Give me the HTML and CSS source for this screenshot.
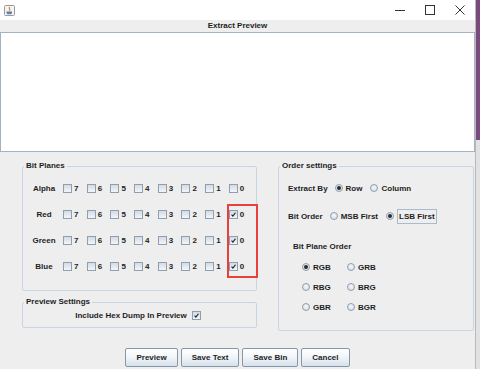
FILE: index.html
```html
<!DOCTYPE html>
<html lang="en">
<head>
  <meta charset="UTF-8" />
  <meta name="viewport" content="width=device-width, initial-scale=1.0" />
  <link rel="stylesheet" href="styles.css">
</head>
<body>
  <div class="screen">
    <div class="window">
      <div class="titlebar">
        <svg class="app-icon" width="11" height="11" viewBox="0 0 11 11">
          <rect x="0.5" y="0.5" width="10" height="10" rx="1" fill="#f4f4f4" stroke="#9a9a9a" />
          <path d="M5.5 2 C4.5 3.5 6.5 4 5.5 5.8" stroke="#e07b1f" stroke-width="1.2" fill="none" />
          <path d="M2.5 6.5 H8 V8 C8 9 7 9.2 5.3 9.2 C3.6 9.2 2.5 9 2.5 8 Z" fill="#5b7fb0" />
        </svg>
        <div class="controls">
          <svg width="10" height="10" viewBox="0 0 10 10"><path d="M0 5.5 H10" stroke="#333" stroke-width="1" /></svg>
          <svg width="10" height="10" viewBox="0 0 10 10"><rect x="0.5" y="0.5" width="9" height="9" fill="none" stroke="#333" stroke-width="1" /></svg>
          <svg width="10" height="10" viewBox="0 0 10 10"><path d="M0.5 0.5 L9.5 9.5 M9.5 0.5 L0.5 9.5" stroke="#333" stroke-width="1" /></svg>
        </div>
      </div>

      <div class="preview-head">Extract Preview</div>
      <div class="preview-area"></div>

      <div class="settings">
        <div class="left-col">
          <div class="group planes">
            <span class="group-title">Bit Planes</span>
            <div class="plane-row">
              <span class="plane-name">Alpha</span>
              <label class="bit"><span class="check"></span>7</label>
              <label class="bit"><span class="check"></span>6</label>
              <label class="bit"><span class="check"></span>5</label>
              <label class="bit"><span class="check"></span>4</label>
              <label class="bit"><span class="check"></span>3</label>
              <label class="bit"><span class="check"></span>2</label>
              <label class="bit"><span class="check"></span>1</label>
              <label class="bit"><span class="check"></span>0</label>
            </div>
            <div class="plane-row">
              <span class="plane-name">Red</span>
              <label class="bit"><span class="check"></span>7</label>
              <label class="bit"><span class="check"></span>6</label>
              <label class="bit"><span class="check"></span>5</label>
              <label class="bit"><span class="check"></span>4</label>
              <label class="bit"><span class="check"></span>3</label>
              <label class="bit"><span class="check"></span>2</label>
              <label class="bit"><span class="check"></span>1</label>
              <label class="bit"><span class="check checked"><svg viewBox="0 0 9 9"><path d="M2 4.6 L3.7 6.6 L7 2.2" /></svg></span>0</label>
            </div>
            <div class="plane-row">
              <span class="plane-name">Green</span>
              <label class="bit"><span class="check"></span>7</label>
              <label class="bit"><span class="check"></span>6</label>
              <label class="bit"><span class="check"></span>5</label>
              <label class="bit"><span class="check"></span>4</label>
              <label class="bit"><span class="check"></span>3</label>
              <label class="bit"><span class="check"></span>2</label>
              <label class="bit"><span class="check"></span>1</label>
              <label class="bit"><span class="check checked"><svg viewBox="0 0 9 9"><path d="M2 4.6 L3.7 6.6 L7 2.2" /></svg></span>0</label>
            </div>
            <div class="plane-row">
              <span class="plane-name">Blue</span>
              <label class="bit"><span class="check"></span>7</label>
              <label class="bit"><span class="check"></span>6</label>
              <label class="bit"><span class="check"></span>5</label>
              <label class="bit"><span class="check"></span>4</label>
              <label class="bit"><span class="check"></span>3</label>
              <label class="bit"><span class="check"></span>2</label>
              <label class="bit"><span class="check"></span>1</label>
              <label class="bit"><span class="check checked"><svg viewBox="0 0 9 9"><path d="M2 4.6 L3.7 6.6 L7 2.2" /></svg></span>0</label>
            </div>
            <div class="highlight"></div>
          </div>

          <div class="group preview-settings">
            <span class="group-title">Preview Settings</span>
            <label class="hex-dump">Include Hex Dump In Preview <span class="check checked"><svg viewBox="0 0 9 9"><path d="M2 4.6 L3.7 6.6 L7 2.2" /></svg></span></label>
          </div>
        </div>

        <div class="group order">
          <span class="group-title">Order settings</span>
          <div class="order-row first">
            <span class="order-label">Extract By</span>
            <label class="option"><span class="radio selected"></span>Row</label>
            <label class="option"><span class="radio"></span>Column</label>
          </div>
          <div class="order-row">
            <span class="order-label">Bit Order</span>
            <label class="option"><span class="radio"></span>MSB First</label>
            <label class="option"><span class="radio selected"></span><span class="focused">LSB First</span></label>
          </div>
          <div class="plane-order-title">Bit Plane Order</div>
          <div class="plane-order-grid">
            <label class="option"><span class="radio selected"></span>RGB</label>
            <label class="option"><span class="radio"></span>GRB</label>
            <label class="option"><span class="radio"></span>RBG</label>
            <label class="option"><span class="radio"></span>BRG</label>
            <label class="option"><span class="radio"></span>GBR</label>
            <label class="option"><span class="radio"></span>BGR</label>
          </div>
        </div>
      </div>

      <div class="buttons">
        <button>Preview</button>
        <button>Save Text</button>
        <button>Save Bin</button>
        <button>Cancel</button>
      </div>
    </div>
    <div class="desktop"></div>
  </div>
</body>
</html>
```

FILE: styles.css
```css
* {
  box-sizing: border-box;
}

html, body {
  margin: 0;
  padding: 0;
  font-family: "Liberation Sans", Arial, sans-serif;
  font-size: 8px;
  font-weight: bold;
  color: #1e1e1e;
  background-color: #eeeeee;
}

.screen {
  display: flex;
  width: 480px;
  height: 369px;
  overflow: hidden;
}

.window {
  width: 475px;
  height: 369px;
  background-color: #eeeeee;
  flex-shrink: 0;
}

.desktop {
  flex: 1;
  border-left: 1px solid #b9b9b9;
  background: linear-gradient(#7a4a7c 0, #7a4a7c 140px, #e2e2e2 140px);
}

.titlebar {
  height: 20px;
  background-color: #ffffff;
  display: flex;
  align-items: center;
  justify-content: space-between;
  padding: 0 10px 0 4px;
}

.app-icon {
  display: block;
}

.controls {
  display: flex;
  gap: 20px;
}

.controls svg {
  display: block;
}

.preview-head {
  height: 12px;
  line-height: 12px;
  text-align: center;
}

.preview-area {
  height: 120px;
  background-color: #ffffff;
  border: 1px solid #a4b3c3;
}

.settings {
  display: flex;
  gap: 21px;
  margin-top: 14px;
  padding-left: 22px;
}

.left-col {
  width: 235px;
}

.group {
  position: relative;
  border: 1px solid #c9d6e2;
  border-radius: 2px;
}

.group-title {
  position: absolute;
  top: -6px;
  left: 1px;
  padding: 0 2px;
  line-height: 10px;
  background-color: #eeeeee;
}

.planes {
  padding: 8px 0 11px 2px;
}

.plane-row {
  display: flex;
  align-items: center;
  height: 26px;
}

.plane-name {
  width: 38px;
  text-align: center;
}

.bit {
  width: 23.7px;
  display: flex;
  align-items: center;
  gap: 2px;
}

.check {
  width: 9px;
  height: 9px;
  border: 1px solid #8f9fb1;
  background: linear-gradient(#d4dbe3, #f3f5f8);
  display: inline-block;
  flex-shrink: 0;
}

.check svg {
  display: block;
  width: 7px;
  height: 7px;
  fill: none;
  stroke: #1a1a1a;
  stroke-width: 1.4;
}

.highlight {
  position: absolute;
  left: 204px;
  top: 37px;
  width: 31px;
  height: 74px;
  border: 2px solid #e8403c;
}

.preview-settings {
  margin-top: 11px;
  height: 26px;
  display: flex;
  align-items: center;
  justify-content: center;
}

.hex-dump {
  display: flex;
  align-items: center;
  gap: 5px;
  margin-left: -3px;
}

.order {
  width: 196px;
  height: 165px;
  padding: 7px 0 0 9px;
}

.order-row {
  display: flex;
  align-items: center;
  height: 28px;
}

.order-label {
  margin-right: 7px;
}

.option {
  display: flex;
  align-items: center;
  gap: 3px;
  margin-right: 8px;
}

.radio {
  width: 8px;
  height: 8px;
  border-radius: 50%;
  border: 1px solid #8f9fb1;
  background: radial-gradient(circle at 50% 40%, #f6f8fa, #d0d8e1);
  display: inline-flex;
  align-items: center;
  justify-content: center;
  flex-shrink: 0;
}

.radio.selected::after {
  content: "";
  width: 4px;
  height: 4px;
  border-radius: 50%;
  background-color: #2a2a2a;
}

.focused {
  border: 1px solid #a9bccf;
  padding: 2px 1px;
  line-height: 9px;
}

.plane-order-title {
  margin-top: 7px;
  height: 20px;
  line-height: 20px;
  padding-left: 5px;
}

.plane-order-grid {
  display: grid;
  grid-template-columns: 45px 60px;
  grid-auto-rows: 20px;
  align-items: center;
  padding-left: 14px;
}

.buttons {
  display: flex;
  justify-content: center;
  gap: 3px;
  margin-top: 17px;
}

button {
  height: 19px;
  padding: 0 10px;
  font-family: "Liberation Sans", Arial, sans-serif;
  font-size: 8px;
  font-weight: bold;
  color: #1e1e1e;
  border: 1px solid #8797a8;
  border-radius: 2px;
  background: linear-gradient(#ffffff, #f2f6fa 45%, #d6e1ec);
}
```
